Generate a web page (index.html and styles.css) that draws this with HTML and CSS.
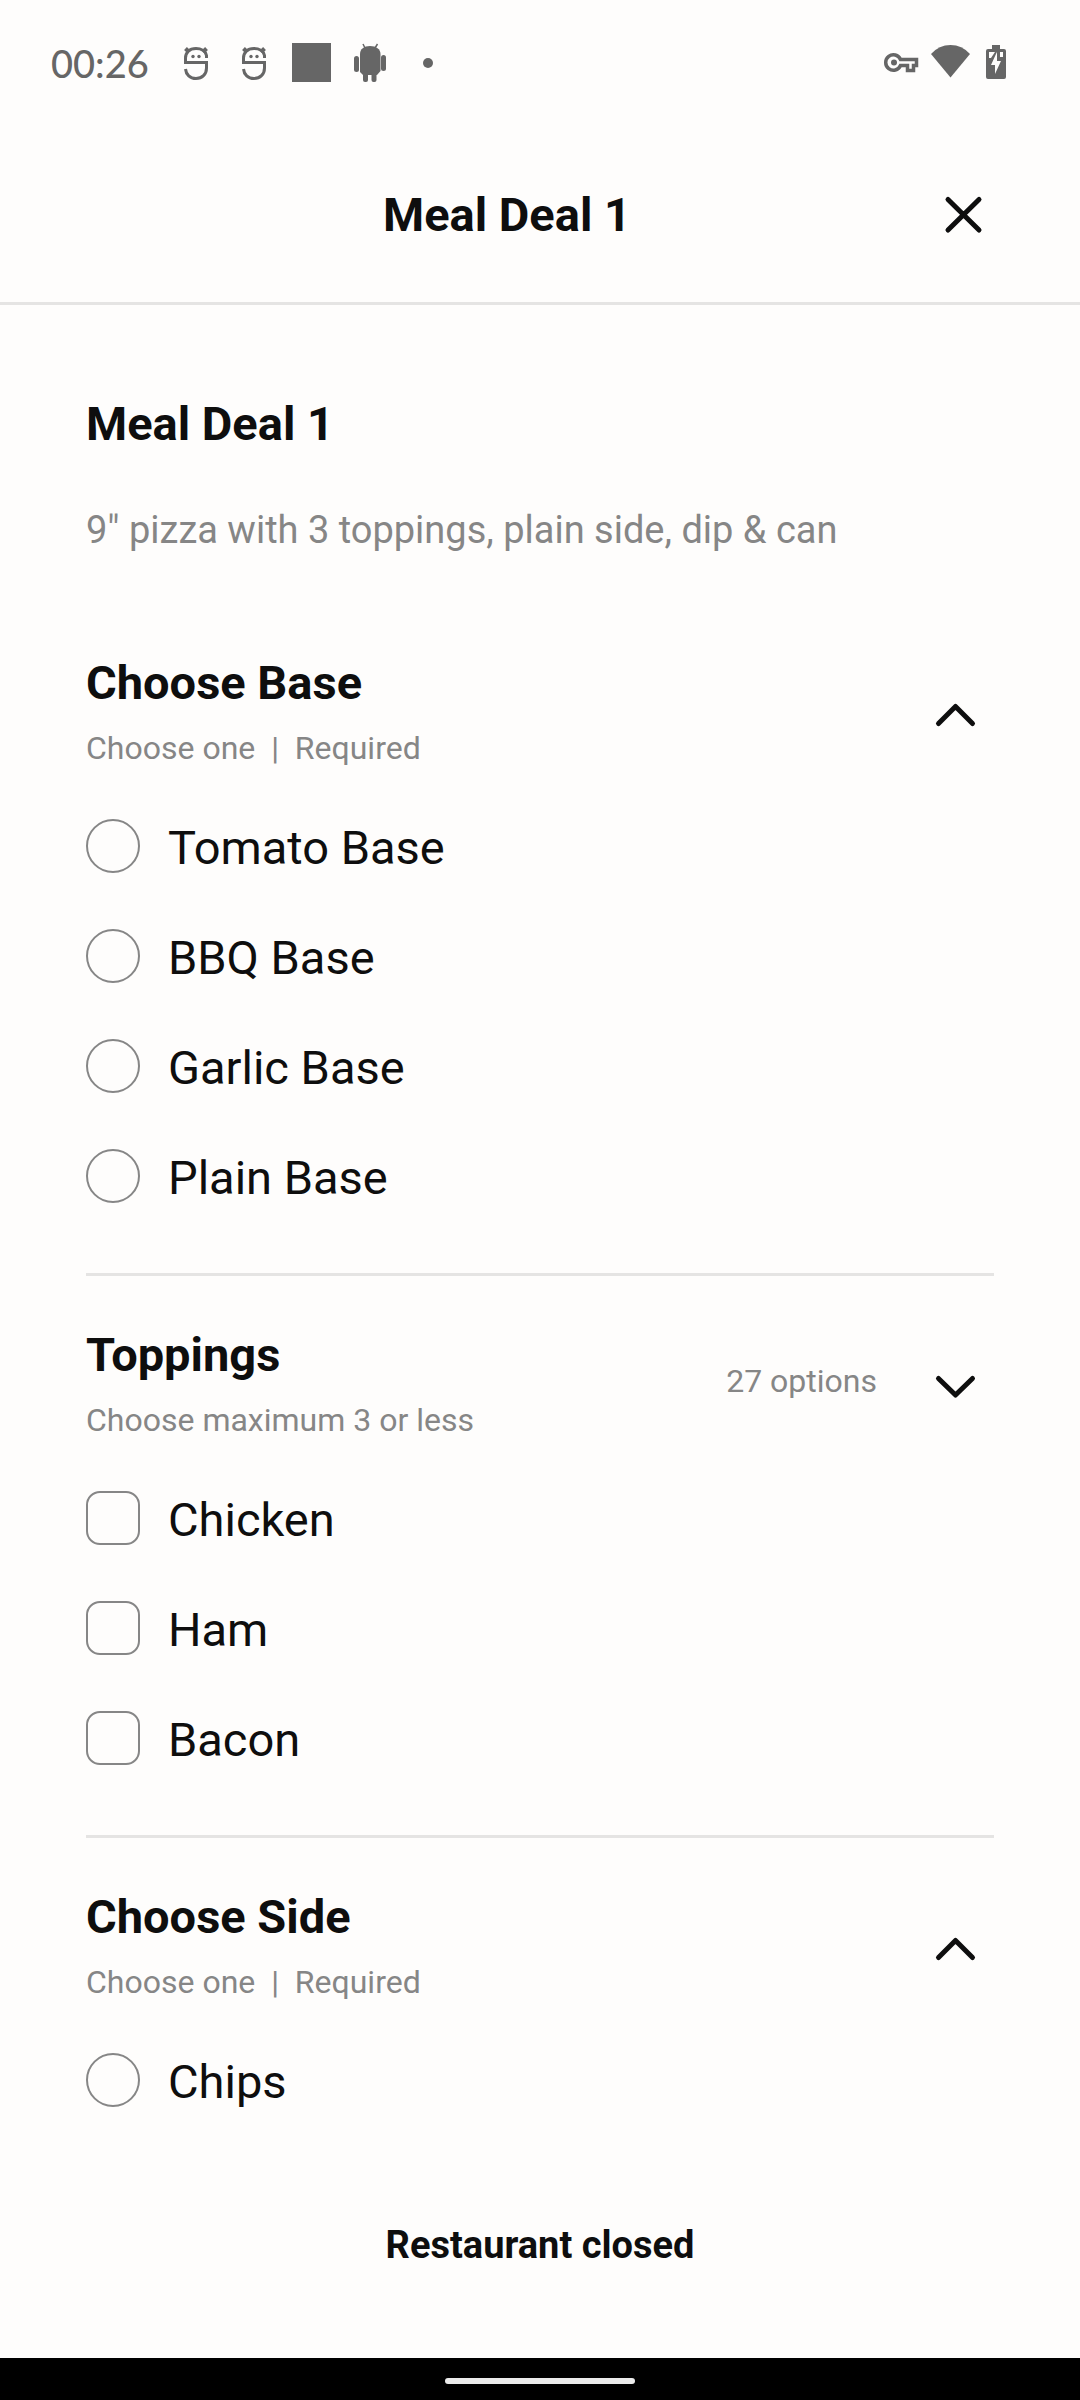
FILE: index.html
```html
<!DOCTYPE html>
<html lang="en">
<head>
<meta charset="utf-8">
<meta name="viewport" content="width=device-width, initial-scale=1">
<title>Meal Deal 1</title>
<link rel="stylesheet" href="styles.css">
</head>
<body>
<div class="screen">
  <div class="status">
    <div class="status-left">
      <time class="clock">00:26</time>
      <svg class="cell" viewBox="0 0 58 40" aria-hidden="true"><g fill="none" stroke="#666" stroke-width="3"><path d="M39.500 15V12.500C38.500 8 34 5.500 29 5.500C22 5.500 18.500 10 18.500 15V19.500H39.500V25C39.500 31.500 35 35.500 29 35.500C23 35.500 19 31.500 18.500 26"/><path d="M22 9L18.500 5.500M36 9L39.500 5.500" stroke-width="4"/></g><circle cx="26" cy="13.500" r="1.700" fill="#666"/><circle cx="32" cy="13.500" r="1.700" fill="#666"/></svg>
      <svg class="cell" viewBox="0 0 58 40" aria-hidden="true"><g fill="none" stroke="#666" stroke-width="3"><path d="M39.500 15V12.500C38.500 8 34 5.500 29 5.500C22 5.500 18.500 10 18.500 15V19.500H39.500V25C39.500 31.500 35 35.500 29 35.500C23 35.500 19 31.500 18.500 26"/><path d="M22 9L18.500 5.500M36 9L39.500 5.500" stroke-width="4"/></g><circle cx="26" cy="13.500" r="1.700" fill="#666"/><circle cx="32" cy="13.500" r="1.700" fill="#666"/></svg>
      <svg class="cell" viewBox="0 0 58 40" aria-hidden="true"><path fill="#666" d="M9 0h39v39H9z"/></svg>
      <svg class="cell" viewBox="0 0 58 40" aria-hidden="true"><g fill="#666"><path d="M19 11C19 6 23 3 29 3S39.500 6 39.500 11V28L36 32H22L19 29Z"/><rect x="13" y="13" width="5" height="16" rx="2.500"/><rect x="40" y="12" width="5" height="16" rx="2.500"/><rect x="22" y="28" width="5" height="11" rx="2"/><rect x="30.500" y="28" width="5" height="11" rx="2"/></g><path d="M24 5L22 1M34 5L36.500 1" stroke="#666" stroke-width="1.500"/></svg>
      <svg class="cell" viewBox="0 0 58 40" aria-hidden="true"><circle cx="29" cy="20" r="5" fill="#666"/></svg>
    </div>
    <div class="status-right">
      <svg class="cell-small" viewBox="0 0 48 40" aria-hidden="true"><g fill="none" stroke="#666" stroke-width="3.500"><path d="M24.500 16.500H40.500V22.500H37.500V27.500H31.500V22.500H24.500A7.700 7.700 0 1 1 24.500 16.500Z"/></g><circle cx="18" cy="19.500" r="3" fill="#666"/></svg>
      <svg class="cell-small" viewBox="0 0 48 40" aria-hidden="true"><path fill="#666" d="M7 11Q15 2 26.500 2T46 11L26.500 34.500Z"/></svg>
      <svg class="cell-small" viewBox="0 0 48 40" aria-hidden="true"><path fill="#666" d="M20 2h8v4h4q2 0 2 2v26q0 2-2 2H16q-2 0-2-2V8q0-2 2-2h4z"/><path fill="#fefdfc" d="M17 9h6l-4 6h-2zM25 9v9h4L23 31V22h-4L24 11zM28 9h3v5h-3z"/></svg>
    </div>
  </div>

  <header class="topbar">
    <h1 class="title topbar-title">Meal Deal 1</h1>
    <button class="icon-button close" type="button" aria-label="Close"><svg class="icon" viewBox="0 0 56 56"><path d="M13 12.500L44 43M44 12.500L13 43"/></svg></button>
  </header>

  <main class="content">
    <h2 class="title">Meal Deal 1</h2>
    <p class="description">9" pizza with 3 toppings, plain side, dip &amp; can</p>

    <section class="group">
      <div class="group-head">
        <div class="group-text">
          <h3 class="title">Choose Base</h3>
          <p class="note">Choose one &nbsp;|&nbsp; Required</p>
        </div>
        <button class="icon-button" type="button" aria-label="Collapse Choose Base"><svg class="icon" viewBox="0 0 56 56"><path d="M10.500 39.500L27.500 22.500L44.500 39.500"/></svg></button>
      </div>
      <label class="option"><input class="mark radio" type="radio" name="base"><span class="option-name">Tomato Base</span></label>
      <label class="option"><input class="mark radio" type="radio" name="base"><span class="option-name">BBQ Base</span></label>
      <label class="option"><input class="mark radio" type="radio" name="base"><span class="option-name">Garlic Base</span></label>
      <label class="option"><input class="mark radio" type="radio" name="base"><span class="option-name">Plain Base</span></label>
    </section>

    <section class="group">
      <div class="group-head">
        <div class="group-text">
          <h3 class="title">Toppings</h3>
          <p class="note">Choose maximum 3 or less</p>
        </div>
        <span class="note count">27 options</span>
        <button class="icon-button" type="button" aria-label="Expand Toppings"><svg class="icon" viewBox="0 0 56 56"><path d="M10.500 22.500L27.500 39L44.500 22.500"/></svg></button>
      </div>
      <label class="option"><input class="mark" type="checkbox" name="topping"><span class="option-name">Chicken</span></label>
      <label class="option"><input class="mark" type="checkbox" name="topping"><span class="option-name">Ham</span></label>
      <label class="option"><input class="mark" type="checkbox" name="topping"><span class="option-name">Bacon</span></label>
    </section>

    <section class="group">
      <div class="group-head">
        <div class="group-text">
          <h3 class="title">Choose Side</h3>
          <p class="note">Choose one &nbsp;|&nbsp; Required</p>
        </div>
        <button class="icon-button" type="button" aria-label="Collapse Choose Side"><svg class="icon" viewBox="0 0 56 56"><path d="M10.500 39.500L27.500 22.500L44.500 39.500"/></svg></button>
      </div>
      <label class="option"><input class="mark radio" type="radio" name="side"><span class="option-name">Chips</span></label>
    </section>
  </main>

  <footer class="order-bar">
    <button class="order-button" type="button">Restaurant closed</button>
  </footer>
  <div class="gesture-bar"><div class="gesture-pill"></div></div>
</div>
</body>
</html>
```
FILE: styles.css
```css
* {
  box-sizing: border-box;
}

body,
h1,
h2,
h3,
p {
  margin: 0;
}

body {
  background: #fefdfc;
  color: #0e0e0e;
  font-family: Roboto, "Liberation Sans", sans-serif;
}

button {
  padding: 0;
  border: 0;
  background: none;
  color: inherit;
  font-family: inherit;
}

.screen {
  display: flex;
  flex-direction: column;
  min-height: 100vh;
}

/* System status bar */
.status {
  display: flex;
  justify-content: space-between;
  align-items: center;
  height: 128px;
  padding: 0 60px 2px 51px;
}

.status-left,
.status-right {
  display: flex;
  align-items: center;
}

.clock {
  width: 116px;
  color: #666;
  font: 500 38px/40px Lato, sans-serif;
}

.cell {
  width: 58px;
  height: 40px;
}

.cell-small {
  width: 48px;
  height: 40px;
}

/* Sheet header */
.topbar {
  display: flex;
  align-items: center;
  padding: 59px 80px 59px 88px;
  border-bottom: 3px solid #e5e4e3;
}

.title {
  font-size: 47px;
  font-weight: 700;
  line-height: 56px;
}

.topbar-title {
  flex: 1;
  text-align: center;
}

.icon-button {
  display: flex;
  justify-content: center;
  width: 56px;
  height: 56px;
}

.close {
  width: 74px;
}

.icon {
  width: 56px;
  height: 56px;
  fill: none;
  stroke: #0e0e0e;
  stroke-width: 5;
  stroke-linecap: round;
  stroke-linejoin: round;
}

/* Meal details */
.content {
  flex: 1;
  padding: 91px 86px 0;
}

.description {
  margin: 56px 0 52px;
  color: #868686;
  font-size: 38px;
  line-height: 44px;
}

.group {
  padding: 51px 0 42px;
}

.group + .group {
  border-top: 3px solid #e5e4e3;
}

.group-head {
  display: flex;
  align-items: center;
  gap: 51px;
  padding: 0 10px 23px 0;
}

.group-text {
  display: flex;
  flex: 1;
  flex-direction: column;
  gap: 17px;
}

.note {
  color: #868686;
  font-size: 32px;
  line-height: 40px;
}

.count {
  padding-bottom: 6px;
}

.option {
  display: flex;
  align-items: center;
  gap: 28px;
  height: 110px;
}

.option-name {
  padding-top: 4px;
  font-size: 47px;
  line-height: 56px;
}

.mark {
  flex: none;
  width: 54px;
  height: 54px;
  margin: 0;
  border: 2px solid #868686;
  border-radius: 14px;
  appearance: none;
}

.radio {
  border-radius: 50%;
}

.mark:checked {
  background: #0e0e0e;
}

/* Footer */
.order-bar {
  padding: 43px 86px 90px;
}

.order-button {
  display: block;
  width: 100%;
  font-size: 38px;
  font-weight: 700;
  line-height: 46px;
}

.gesture-bar {
  display: flex;
  justify-content: center;
  align-items: center;
  height: 42px;
  padding-top: 4px;
  background: #000;
}

.gesture-pill {
  width: 190px;
  height: 6px;
  border-radius: 3px;
  background: #ebebeb;
}
```
